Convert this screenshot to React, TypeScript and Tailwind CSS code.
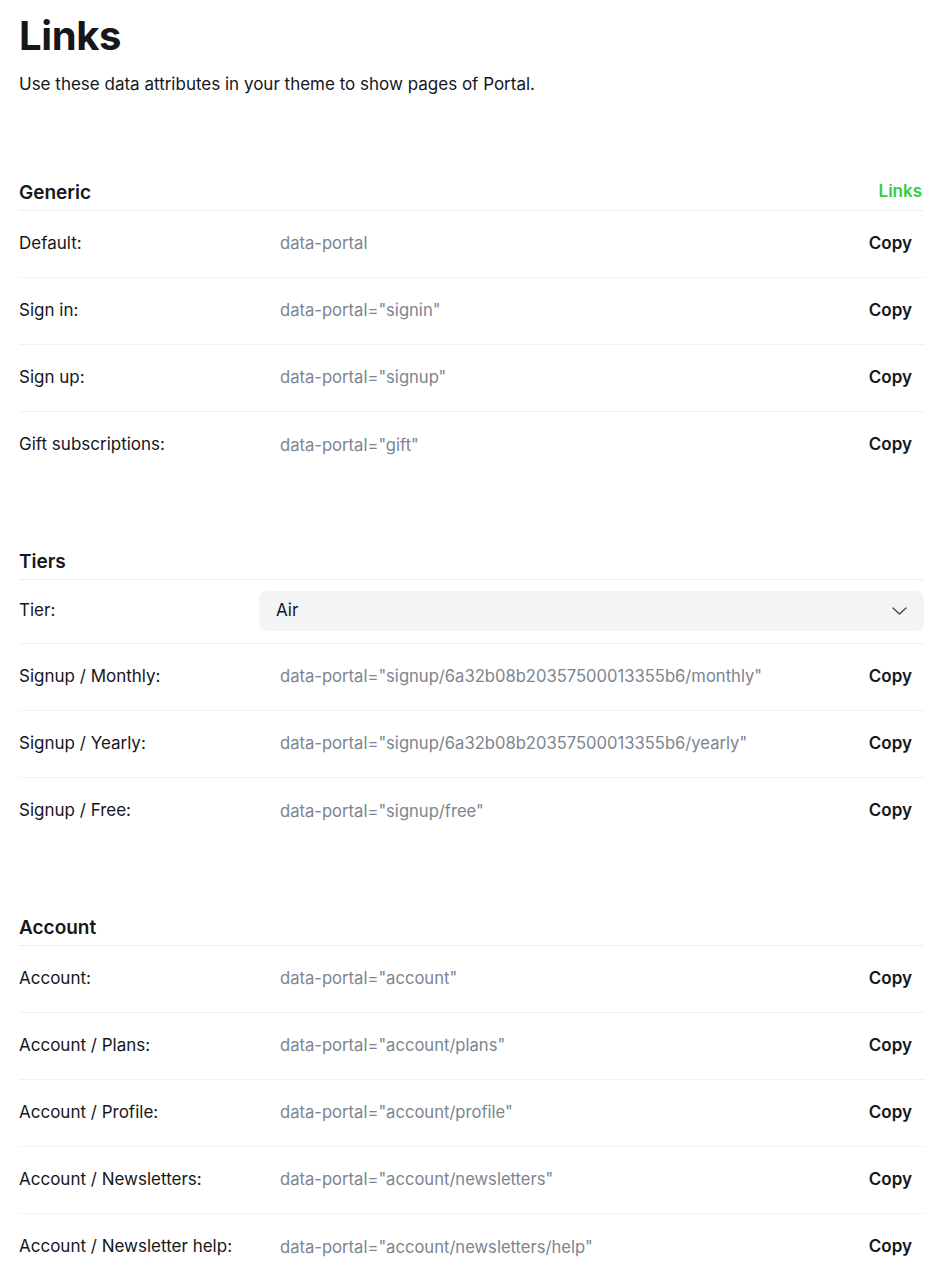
type Link = { label: string; value: string };

const generic: Link[] = [
  { label: 'Default:', value: 'data-portal' },
  { label: 'Sign in:', value: 'data-portal="signin"' },
  { label: 'Sign up:', value: 'data-portal="signup"' },
  { label: 'Gift subscriptions:', value: 'data-portal="gift"' },
];

const tiers: Link[] = [
  { label: 'Signup / Monthly:', value: 'data-portal="signup/6a32b08b20357500013355b6/monthly"' },
  { label: 'Signup / Yearly:', value: 'data-portal="signup/6a32b08b20357500013355b6/yearly"' },
  { label: 'Signup / Free:', value: 'data-portal="signup/free"' },
];

const account: Link[] = [
  { label: 'Account:', value: 'data-portal="account"' },
  { label: 'Account / Plans:', value: 'data-portal="account/plans"' },
  { label: 'Account / Profile:', value: 'data-portal="account/profile"' },
  { label: 'Account / Newsletters:', value: 'data-portal="account/newsletters"' },
  { label: 'Account / Newsletter help:', value: 'data-portal="account/newsletters/help"' },
];

function Row({ label, value }: Link) {
  return (
    <div className="flex h-[67px] items-center border-b border-[#eff1f3] last:border-b-0">
      <div className="w-[240px] shrink-0">{label}</div>
      <div className="flex-1 pl-[21px] text-[16.6px] text-[#7c858f]">{value}</div>
      <button className="px-3 font-semibold text-[#15171a]">Copy</button>
    </div>
  );
}

function Section({ title, action, children }: { title: string; action?: string; children: React.ReactNode }) {
  return (
    <section className="mt-[71px] first:mt-0">
      <div className="flex items-end justify-between border-b border-[#eceef0] pb-[5px]">
        <h2 className="text-[19px] font-semibold leading-6">{title}</h2>
        {action && <span className="pr-[2px] text-[17px] font-semibold text-[#30cf43]">{action}</span>}
      </div>
      {children}
    </section>
  );
}

export default function App() {
  return (
    <main
      className="min-h-screen bg-white px-[19px] pt-[14px] text-[17px] text-[#15171a]"
      style={{ fontFamily: 'Inter, "Noto Sans", sans-serif' }}
    >
      <div className="w-[905px]">
        <h1 className="text-[40px] font-bold leading-[44px] tracking-[-0.01em]">Links</h1>
        <p className="mt-[14px] leading-6">Use these data attributes in your theme to show pages of Portal.</p>

        <div className="mt-[83px]">
          <Section title="Generic" action="Links">
            {generic.map((l) => (
              <Row key={l.label} {...l} />
            ))}
          </Section>

          <Section title="Tiers">
            <div className="flex h-[64px] items-center border-b border-[#eff1f3]">
              <div className="w-[240px] shrink-0">Tier:</div>
              <div className="flex h-10 flex-1 items-center justify-between rounded-lg bg-[#f3f4f6] pl-[17px] pr-[17px]">
                <span>Air</span>
                <svg width="15" height="8" viewBox="0 0 15 8" fill="none" stroke="#3f444a" strokeWidth="1.3" strokeLinecap="round" strokeLinejoin="round">
                  <path d="M1 1l6.5 6L14 1" />
                </svg>
              </div>
            </div>
            {tiers.map((l) => (
              <Row key={l.label} {...l} />
            ))}
          </Section>

          <Section title="Account">
            {account.map((l) => (
              <Row key={l.label} {...l} />
            ))}
          </Section>
        </div>
      </div>
    </main>
  );
}
